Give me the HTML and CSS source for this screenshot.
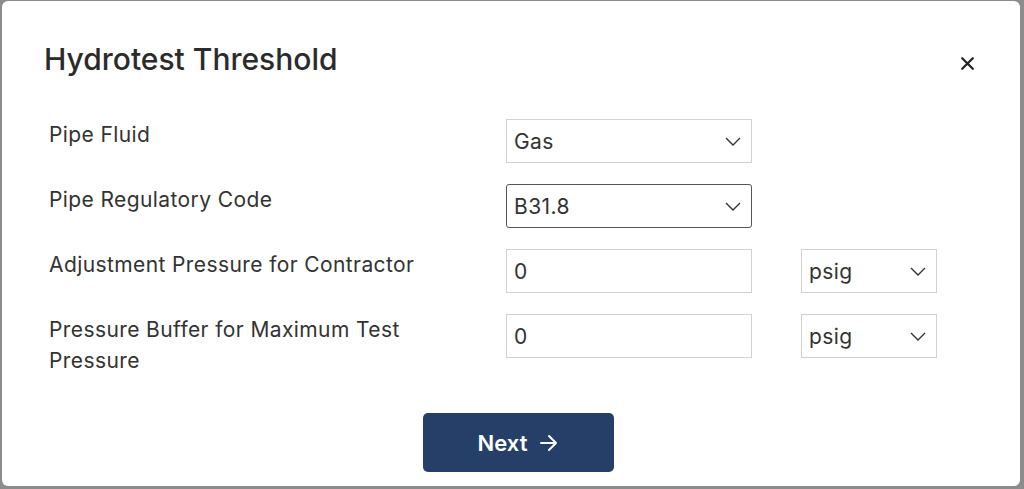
FILE: index.html
```html
<!DOCTYPE html>
<html lang="en">
<head>
<meta charset="utf-8">
<title>Hydrotest Threshold</title>
<link rel="stylesheet" href="styles.css">
</head>
<body>
<div class="modal">
  <div class="modal-header">
    <h1 class="modal-title">Hydrotest Threshold</h1>
    <button class="close-btn" aria-label="Close">
      <svg width="13" height="13" viewBox="0 0 13 13"><path d="M1.2 1.2L11.8 11.8M11.8 1.2L1.2 11.8" stroke="#222" stroke-width="2.2" stroke-linecap="round"/></svg>
    </button>
  </div>
  <form class="form">
    <label class="label">Pipe Fluid</label>
    <div class="field select"><span>Gas</span><svg class="chev" width="16" height="9" viewBox="0 0 16 9"><path d="M1 1L8 8L15 1" fill="none" stroke="#333" stroke-width="1.4"/></svg></div>
    <div class="unit-cell"></div>

    <label class="label">Pipe Regulatory Code</label>
    <div class="field select focused"><span>B31.8</span><svg class="chev" width="16" height="9" viewBox="0 0 16 9"><path d="M1 1L8 8L15 1" fill="none" stroke="#333" stroke-width="1.4"/></svg></div>
    <div class="unit-cell"></div>

    <label class="label">Adjustment Pressure for Contractor</label>
    <div class="field"><span>0</span></div>
    <div class="unit-cell"><div class="unit select"><span>psig</span><svg class="chev" width="16" height="9" viewBox="0 0 16 9"><path d="M1 1L8 8L15 1" fill="none" stroke="#333" stroke-width="1.4"/></svg></div></div>

    <label class="label">Pressure Buffer for Maximum Test Pressure</label>
    <div class="field"><span>0</span></div>
    <div class="unit-cell"><div class="unit select"><span>psig</span><svg class="chev" width="16" height="9" viewBox="0 0 16 9"><path d="M1 1L8 8L15 1" fill="none" stroke="#333" stroke-width="1.4"/></svg></div></div>
  </form>
  <div class="footer">
    <button class="next-btn">Next <svg width="20" height="18" viewBox="0 0 20 18"><path d="M2 9H17M10 2L17 9L10 16" fill="none" stroke="#fff" stroke-width="2" stroke-linecap="round" stroke-linejoin="round"/></svg></button>
  </div>
</div>
</body>
</html>
```
FILE: styles.css
```css
* { box-sizing: border-box; }
html, body { margin: 0; padding: 0; }
body {
  background: #8c8c8c;
  width: 1024px;
  height: 489px;
  padding: 1px 4px 3px 2px;
  font-family: Inter, "Noto Sans", sans-serif;
  color: #333;
}
.modal {
  background: #fff;
  border-radius: 6px;
  height: 485px;
}
.modal-header {
  display: flex;
  align-items: flex-start;
  justify-content: space-between;
  padding: 39px 46px 0 42px;
}
.modal-title {
  margin: 0;
  font-size: 30px;
  line-height: 38px;
  font-weight: 500;
  color: #2b2b2b;
}
.close-btn {
  background: none;
  border: 0;
  padding: 0;
  margin-top: 17px;
  width: 13px;
  height: 13px;
  display: flex;
}
.form {
  display: grid;
  grid-template-columns: 457px 246px 185px;
  row-gap: 21px;
  padding: 41px 0 0 47px;
}
.label {
  font-size: 21px;
  line-height: 31px;
  letter-spacing: 0.4px;
  color: #333;
  padding-right: 30px;
}
.field {
  height: 44px;
  border: 1px solid #d2d2d2;
  display: flex;
  align-items: center;
  justify-content: space-between;
  padding: 0 10px 0 7px;
  font-size: 21px;
  letter-spacing: 0.4px;
  color: #333;
}
.select.focused {
  border-color: #555;
  border-radius: 3px;
}
.unit-cell {
  display: flex;
  justify-content: flex-end;
}
.unit {
  width: 136px;
  height: 44px;
  border: 1px solid #d2d2d2;
  display: flex;
  align-items: center;
  justify-content: space-between;
  padding: 0 10px 0 7px;
  font-size: 21px;
  letter-spacing: 0.4px;
  color: #333;
}
.chev { display: block; }
.footer {
  display: flex;
  justify-content: center;
  padding: 37px 0 0 15px;
}
.next-btn {
  width: 191px;
  height: 59px;
  background: #253f69;
  color: #fff;
  border: 0;
  border-radius: 5px;
  font-family: Inter, "Noto Sans", sans-serif;
  font-size: 22px;
  font-weight: 600;
  display: flex;
  align-items: center;
  justify-content: center;
  gap: 12px;
}
```
